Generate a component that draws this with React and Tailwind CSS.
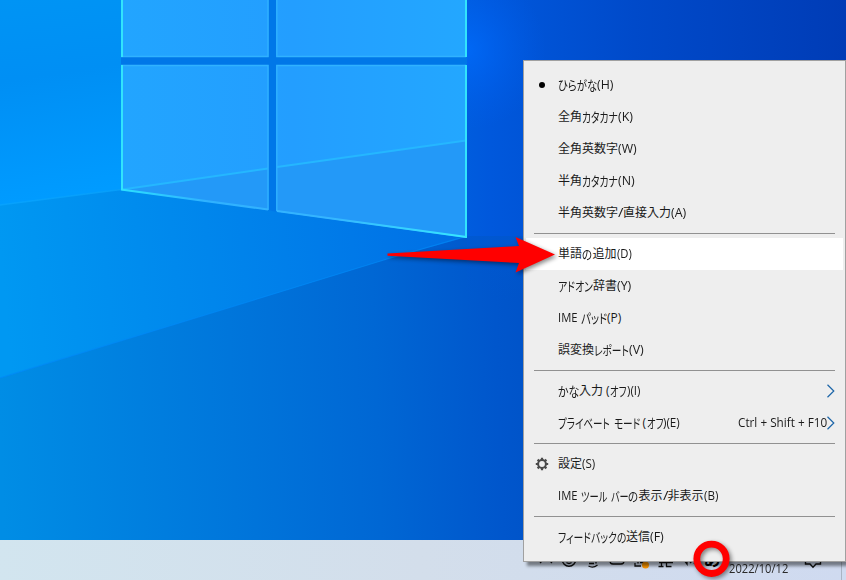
import React, { useLayoutEffect, useRef, useState } from 'react';

// each label is a list of [text, width] runs, kana runs are set narrower than kanji
const groups = [
    [
        { label: [['ひらがな', 39], ['(H)', 16.5]], icon: 'dot' },
        { label: [['全角', 24], ['カタカナ', 36], ['(K)', 14.5]] },
        { label: [['全角英数字', 60], ['(W)', 18.5]] },
        { label: [['半角', 24], ['カタカナ', 36], ['(N)', 16.5]] },
        { label: [['半角英数字', 60], ['/', 5], ['直接入力', 48], ['(A)', 15.5]] },
    ],
    [
        { label: [['単語', 24], ['の', 10.5], ['追加', 24], ['(D)', 15]], active: true },
        { label: [['アドオン', 35], ['辞書', 24], ['(Y)', 14.5]] },
        { label: [['IME ', 22.5], ['パッド', 26.5], ['(P)', 14]] },
        { label: [['誤変換', 36], ['レポート', 35], ['(V)', 14.5]] },
    ],
    [
        { label: [['かな', 21], ['入力', 24], [' (', 7], ['オフ', 16.5], [')(I)', 13.5]], submenu: true },
        {
            label: [['プライベート', 52], [' ', 3.5], ['モード', 26], [' (', 7], ['オフ', 16.5], [')(E)', 16.5]],
            shortcut: 'Ctrl + Shift + F10',
            submenu: true,
        },
    ],
    [
        { label: [['設定', 24], ['(S)', 13.5]], icon: 'gear' },
        { label: [['IME ', 22.5], ['ツール', 26.5], [' ', 3.5], ['バー', 17.5], ['の', 10.5], ['表示', 24], ['/', 5], ['非表示', 36], ['(B)', 14.5]] },
    ],
    [{ label: [['フィードバックの', 68], ['送信', 24], ['(F)', 13.5]] }],
];

const isKana = (text) => /^[\u3040-\u30ff]+$/.test(text);

const Run = ({ text, width }) => {
    const ref = useRef(null);
    const [scale, setScale] = useState(1);

    useLayoutEffect(() => {
        setScale(width / ref.current.offsetWidth);
    }, [width]);

    return (
        <span className={`inline-flex h-4 shrink-0 ${isKana(text) ? "text-[13px] [font-feature-settings:'palt']" : ''}`} style={{ width }}>
            <span ref={ref} className="shrink-0 origin-left whitespace-pre" style={{ transform: `scaleX(${scale})` }}>
                {text}
            </span>
        </span>
    );
};

const Gear = () => (
    <svg width="14" height="14" viewBox="0 0 14 14" fill="none" stroke="#4a4a4a">
        <circle cx="7" cy="7" r="3.900" strokeWidth="2" />
        <path
            d="M7 .8v2.400M7 10.800v2.400M.8 7h2.400M10.800 7h2.400M2.600 2.600l1.700 1.700M9.700 9.700l1.700 1.700M11.400 2.600L9.700 4.300M4.300 9.700l-1.700 1.700"
            strokeWidth="2.200"
        />
    </svg>
);

const MenuItem = ({ label, icon, active, shortcut, submenu }) => (
    <div className={`mx-0.5 flex h-8 items-center pr-2 ${active ? 'bg-white' : ''}`}>
        <div className="flex w-8 shrink-0 items-center justify-center">
            {icon === 'dot' && <span className="size-1.5 rounded-full bg-black" />}
            {icon === 'gear' && <Gear />}
        </div>
        <div className="flex flex-1 leading-4">
            {label.map(([text, width], i) => (
                <Run key={i} text={text} width={width} />
            ))}
        </div>
        {shortcut && (
            <div className="-mr-px flex leading-4">
                <Run text={shortcut} width={89} />
            </div>
        )}
        {submenu && (
            <svg width="9" height="14" viewBox="0 0 9 14" fill="none" stroke="#1c65a8" strokeWidth="1.2">
                <path d="M1.500 .8L7.800 7l-6.300 6.200" />
            </svg>
        )}
    </div>
);

const ImeMenu = () => (
    <div className="absolute top-[60px] left-[523px] w-[323px] border border-[#a0a0a0] bg-[#eee] py-2 font-['Open_Sans','Noto_Sans_CJK_JP',sans-serif] text-[12px] text-[#1a1a1a] shadow-[4px_4px_3px_rgba(0,0,0,0.45)]">
        {groups.map((items, i) => (
            <React.Fragment key={i}>
                {i > 0 && <div className="mx-2.5 my-1 h-px bg-[#919191]" />}
                {items.map((item, j) => (
                    <MenuItem key={j} {...item} />
                ))}
            </React.Fragment>
        ))}
    </div>
);

const Wallpaper = () => (
    <svg className="block" width="846" height="540" viewBox="0 0 846 540">
        <defs>
            <linearGradient id="base" x1="0" y1="0" x2="846" y2="0" gradientUnits="userSpaceOnUse">
                <stop offset="0" stopColor="#0093f3" />
                <stop offset=".2" stopColor="#0085ee" />
                <stop offset=".42" stopColor="#0070e6" />
                <stop offset=".58" stopColor="#0058dc" />
                <stop offset=".75" stopColor="#004aca" />
                <stop offset="1" stopColor="#003cb6" />
            </linearGradient>
            <linearGradient id="upper" x1="0" y1="0" x2="30" y2="200" gradientUnits="userSpaceOnUse">
                <stop offset="0" stopColor="#0094f4" />
                <stop offset=".4" stopColor="#008ff4" />
                <stop offset="1" stopColor="#009bff" />
            </linearGradient>
            <linearGradient id="middle" x1="0" y1="250" x2="460" y2="210" gradientUnits="userSpaceOnUse">
                <stop offset="0" stopColor="#0098f2" />
                <stop offset=".45" stopColor="#0086ec" />
                <stop offset="1" stopColor="#006fe5" />
            </linearGradient>
            <linearGradient id="lower" x1="0" y1="420" x2="580" y2="400" gradientUnits="userSpaceOnUse">
                <stop offset="0" stopColor="#008de5" />
                <stop offset=".4" stopColor="#0076db" />
                <stop offset=".65" stopColor="#0067d4" />
                <stop offset=".86" stopColor="#0056cc" />
                <stop offset="1" stopColor="#004fc4" />
            </linearGradient>
            {/* lets the lower field melt into the dark side of the sky */}
            <linearGradient id="fade" x1="0" y1="225" x2="0" y2="300" gradientUnits="userSpaceOnUse">
                <stop offset="0" stopColor="#0058d6" />
                <stop offset="1" stopColor="#0058d0" stopOpacity="0" />
            </linearGradient>
            <radialGradient id="glow" cx="466" cy="50" r="80" gradientUnits="userSpaceOnUse">
                <stop offset="0" stopColor="#006dff" stopOpacity=".7" />
                <stop offset="1" stopColor="#0060f0" stopOpacity="0" />
            </radialGradient>
            <linearGradient id="pane" x1="121" y1="0" x2="466" y2="0" gradientUnits="userSpaceOnUse">
                <stop offset="0" stopColor="#22a5ff" />
                <stop offset=".5" stopColor="#239eff" />
                <stop offset="1" stopColor="#23a7ff" />
            </linearGradient>
            <linearGradient id="bottomEdge" x1="121" y1="0" x2="466" y2="0" gradientUnits="userSpaceOnUse">
                <stop offset="0" stopColor="#2be0ff" />
                <stop offset=".25" stopColor="#2fb1ff" />
                <stop offset=".6" stopColor="#35b5ff" />
                <stop offset="1" stopColor="#37e8ff" />
            </linearGradient>
        </defs>
        <rect width="846" height="540" fill="url(#base)" />
        <path d="M0 378L387 259L467 236H523V540H0z" fill="url(#lower)" />
        <path d="M467 236H523V300H467z" fill="url(#fade)" opacity=".6" />
        <path d="M0 205L121 189L467 237L387 259L0 378z" fill="url(#middle)" />
        <path d="M0 0H121V189L0 205z" fill="url(#upper)" />
        <rect x="380" y="0" width="170" height="150" fill="url(#glow)" />
        <path d="M0 205L121 189.500" stroke="#0ba6ff" strokeWidth="1.5" opacity=".7" />
        <path d="M0 378L387 259L460 238" fill="none" stroke="#0089f5" strokeWidth="1.2" opacity=".7" />
        <path d="M268 0h9v212l-9-2zM121 57h346v8H121z" fill="#0077e8" />

        <g fill="url(#pane)">
            <path d="M121 0H268.500V57H121zM276.500 0H467V57H276.500z" />
            <path d="M121 65H268.500V210L121 190zM276.500 65H467V238L276.500 211.500z" />
        </g>
        <path d="M122 189.500L268 168.500V210zM277 167L466 140.500V237.500L277 211.500z" fill="#2399f8" />
        <path d="M122 189.500L268 168.500M277 167L466 140.500" stroke="#25b7ff" strokeWidth="1.8" />
        <path d="M121 56.500H268V0M276.800 0V56.500H466M121 65.500H268V210M276.800 211V65.500H466" fill="none" stroke="#30b2ff" strokeWidth="1.4" />
        <path d="M121 189.500L268 209.500M277 211L466.500 237" stroke="url(#bottomEdge)" strokeWidth="2" />
        <path d="M122 0V57M122 65V190M466 0V57M466 65V238" stroke="#32e4fc" strokeWidth="2" />
    </svg>
);

const Taskbar = () => (
    <div className="flex h-10 items-center justify-end bg-linear-to-r from-[#d2e5ef] via-[#d3deeb] to-[#cfdaf0] font-['Open_Sans','Noto_Sans_CJK_JP',sans-serif] text-[#222]">
        <svg width="164" height="40" viewBox="0 0 164 40" fill="none" stroke="#111" strokeWidth="1.3">
            <path d="M3 23l6-6 6 6" />
            <circle cx="32" cy="19.500" r="6.800" strokeWidth="1.5" />
            <path d="M29.500 22.500q2.500 2 5 0" />
            <path d="M52 23.500h5M59 21v2.500M51.500 26q4.500 2.500 9-1" />
            <rect x="73" y="14" width="14" height="10" rx="3" />
            <path d="M101 15v8.500M98 23v3h6M103 22.500h4" />
            <circle cx="108.500" cy="25" r="3.500" fill="#ff9800" stroke="none" />
            <path d="M122 22.500h14M124.500 20v6.500M121.500 26.500h5M129.500 20v6.500h5" />
            <path d="M144 20h3l3 4V13l-3 5h-3zM153 23l3-3M157 17q3 3 0 7" />
        </svg>
        <div className="flex h-5 w-[22px] items-center justify-center text-[17px] leading-5 font-bold text-black">あ</div>
        <div className="mt-[18px] ml-1.5 flex text-[12.5px] leading-4 text-[#2a2a2a]">
            <Run text="2022/10/12" width={59} />
        </div>
        <svg className="ml-4" width="18" height="40" viewBox="0 0 18 40" fill="none" stroke="#111" strokeWidth="1.4">
            <path d="M1.500 12h15v12h-4.500l-3 3.200-3-3.200H1.500z" />
        </svg>
        <div className="ml-[19px] h-full w-[5px] border-l border-[#a9b4c4]" />
    </div>
);

// red arrow and ring drawn over the desktop
const Annotations = () => (
    <svg className="absolute inset-0 drop-shadow-[2px_2px_2px_rgba(0,0,0,0.45)]" width="846" height="580" viewBox="0 0 846 580">
        <path d="M387.500 253.500L519 246L515.500 237L555 254.500L515.500 272.500L519 263L387.500 255.800z" fill="#f00" />
        <circle cx="711.500" cy="558.800" r="14.700" fill="none" stroke="#f00" strokeWidth="6.800" />
    </svg>
);

export default function App() {
    return (
        <div className="relative flex h-[580px] w-[846px] flex-col overflow-hidden">
            <Wallpaper />
            <Taskbar />
            <ImeMenu />
            <Annotations />
        </div>
    );
}
